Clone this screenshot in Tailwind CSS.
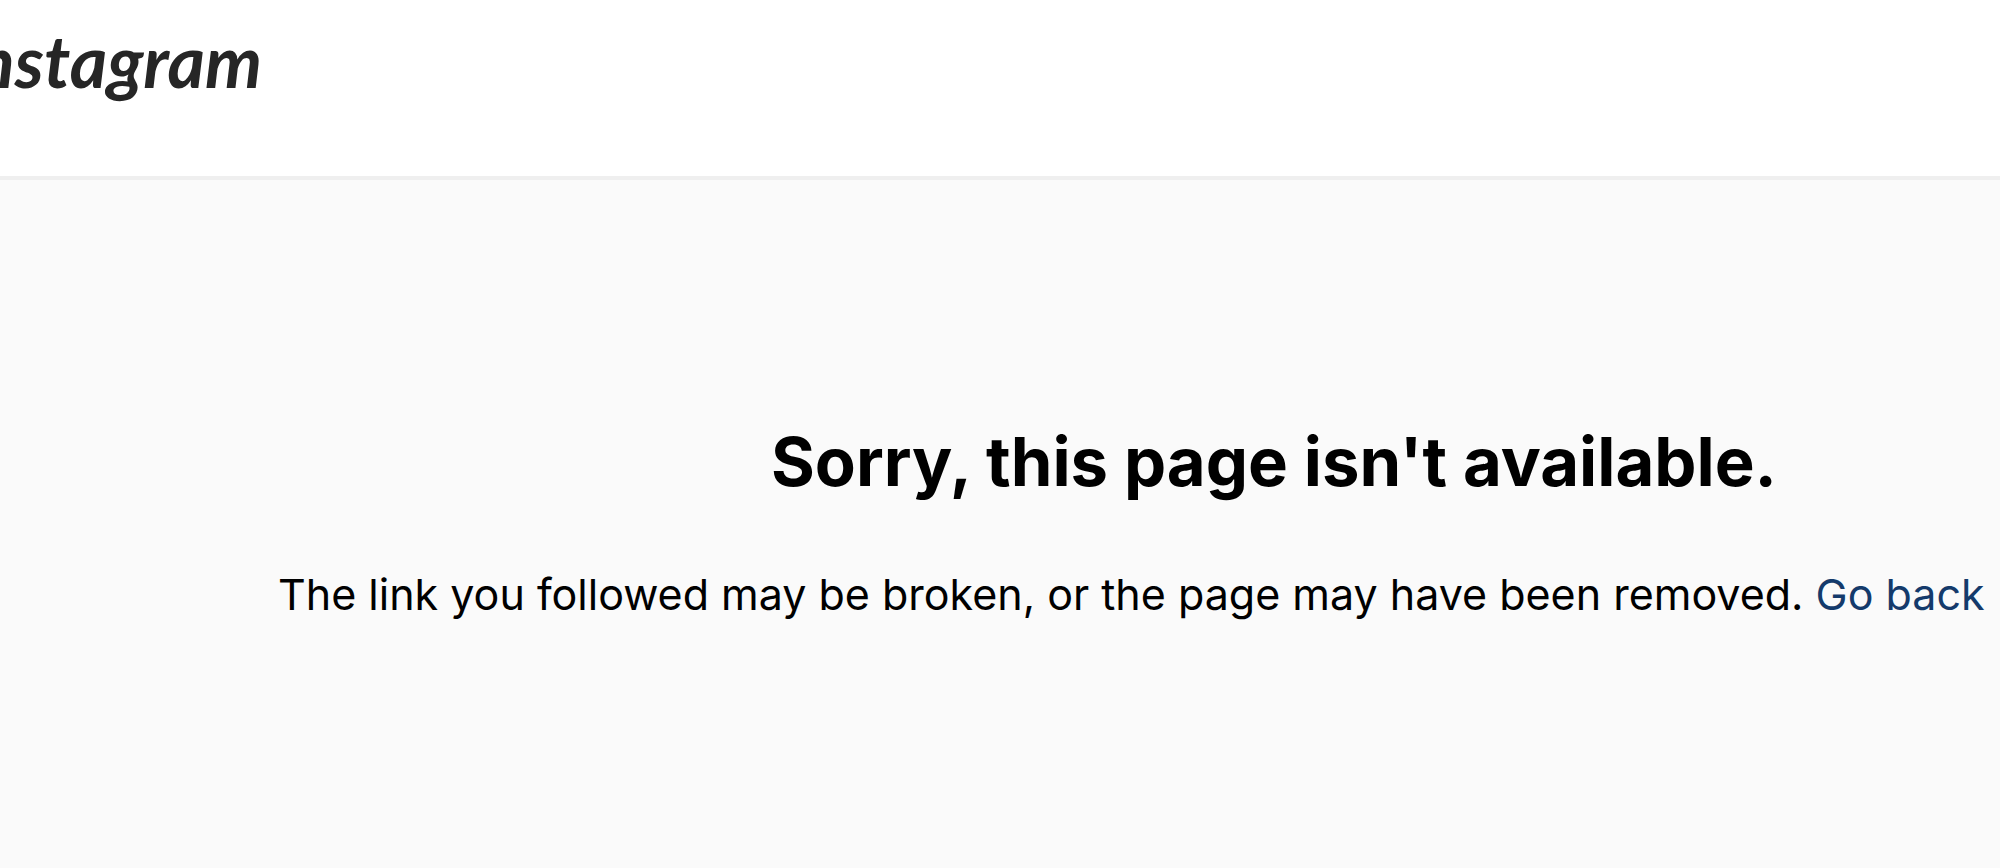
<!DOCTYPE html>
<html lang="en">

<head>
  <meta charset="UTF-8" />
  <meta name="viewport" content="width=device-width, initial-scale=1.0" />
  <title>Page not found</title>
  <script src="https://cdn.jsdelivr.net/npm/@tailwindcss/browser@4"></script>
</head>

<body class="min-h-screen overflow-x-hidden bg-[#fafafa] font-['Inter',sans-serif] text-black">
  <!-- Header, the wordmark runs off the left edge -->
  <header class="flex h-[180px] items-start overflow-hidden border-b-4 border-[#efefef] bg-white pt-3">
    <a href="#" class="flex w-[262px] justify-end font-['Lato',sans-serif] text-[72px] leading-[96px] font-bold text-[#262626] italic">nstagram</a>
  </header>

  <!-- Error message -->
  <main class="flex flex-col gap-12 overflow-hidden pt-[234px] pb-24">
    <h1 class="pl-[548px] text-center text-[67px] leading-[96px] font-bold whitespace-nowrap">Sorry, this page isn't available.</h1>
    <p class="pl-[278px] text-[43px] leading-[72px] whitespace-nowrap">
      The link you followed may be broken, or the page may have been removed.
      <a href="#" class="text-[#143a6b]">Go back</a>
    </p>
  </main>
</body>

</html>
